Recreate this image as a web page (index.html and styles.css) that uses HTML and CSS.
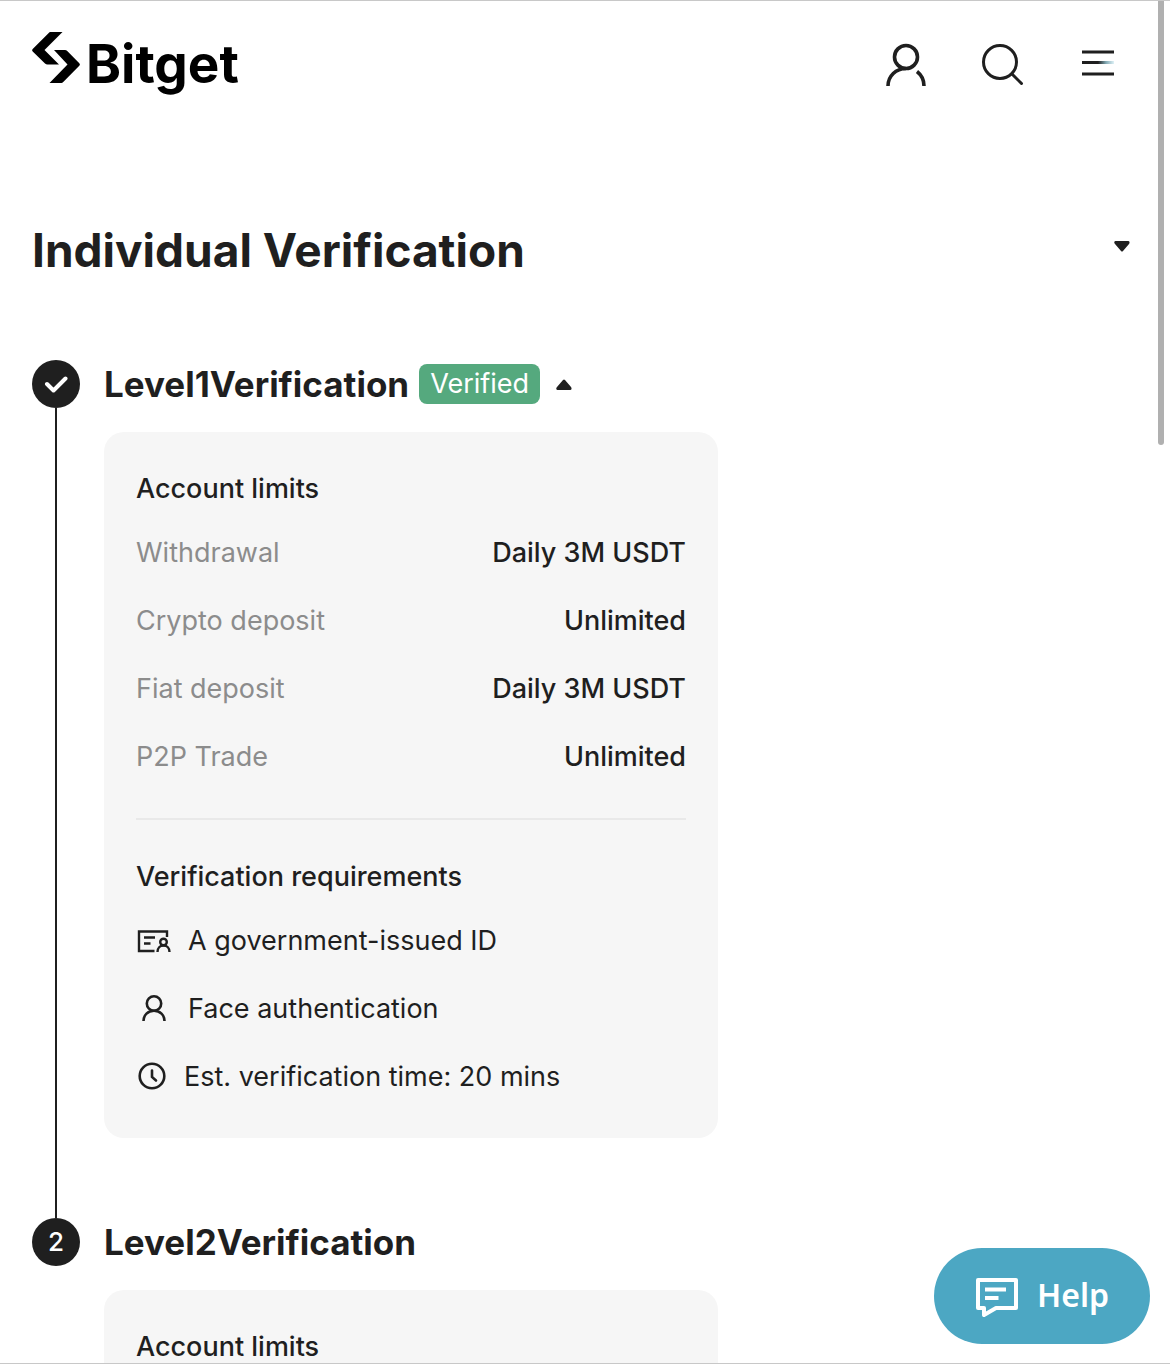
FILE: index.html
```html
<!DOCTYPE html>
<html lang="en">
<head>
<meta charset="utf-8">
<meta name="viewport" content="width=device-width, initial-scale=1">
<title>Individual Verification</title>
<link rel="stylesheet" href="styles.css">
</head>
<body>
<div class="page">
  <header class="header">
    <a class="logo" href="#">
      <svg class="logo-mark" width="48" height="52" viewBox="0 0 48 52" aria-hidden="true"><path d="M18 0H30.500L12.500 18L27 32.500H15.500Q14 32.500 13 31.500L.7 19.500Q-.5 18.300 .7 17L17 .7Q17.500 0 18 0ZM22 18H33Q34.200 18 35 18.800L47.300 31.200Q48.500 32.500 47.300 33.700L31 50.300Q30.300 51 29.500 51H17.500L35.500 32.500Z"/></svg>
      <span class="logo-name">Bitget</span>
    </a>
    <nav class="actions">
      <button class="icon-button" type="button" aria-label="Account">
        <svg width="48" height="48" viewBox="0 0 48 48" fill="none" stroke="#1f1f1f" stroke-width="3.600"><circle cx="24" cy="17" r="11.500"/><path d="M6 46C6 36 14 28.500 24 28.500M42 46C42 40 39.500 35 35 31.500"/></svg>
      </button>
      <button class="icon-button" type="button" aria-label="Search">
        <svg width="48" height="48" viewBox="0 0 48 48" fill="none" stroke="#1f1f1f" stroke-width="3" stroke-linecap="round"><circle cx="22" cy="22" r="16.500"/><path d="M34 34L43.500 43.500"/></svg>
      </button>
      <button class="icon-button" type="button" aria-label="Menu">
        <svg width="48" height="48" viewBox="0 0 48 48"><defs><linearGradient id="fade"><stop offset=".5" stop-color="#1f1f1f"/><stop offset=".75" stop-color="#82a9b4"/><stop offset="1" stop-color="#dff2f7"/></linearGradient></defs><path fill="#1f1f1f" d="M8 10.500H40V13.500H8ZM8 32.500H40V35.500H8Z"/><rect x="8" y="21" width="32" height="3" fill="url(#fade)"/></svg>
      </button>
    </nav>
  </header>

  <main class="main">
    <div class="title-row">
      <h1 class="title">Individual Verification</h1>
      <button class="caret-button" type="button" aria-label="Change verification type">
        <svg width="16" height="11" viewBox="0 0 16 11" fill="#1f1f1f"><path d="M1.500 0H14.500Q16 .5 15.500 2L15 3L9 10Q8 11 7 10L1 3Q0 2 .3 1Q.6 0 1.500 0Z"/></svg>
      </button>
    </div>

    <ol class="steps">
      <li class="step">
        <div class="rail">
          <span class="badge">
            <svg width="24" height="24" viewBox="0 0 24 24" fill="none" stroke="#fff" stroke-width="4" stroke-linecap="round" stroke-linejoin="round" aria-hidden="true"><path d="M3 12L9.500 18.500L21.500 6.500"/></svg>
          </span>
          <span class="line"></span>
        </div>
        <div class="step-body">
          <div class="step-head">
            <h2 class="step-title">Level1Verification</h2>
            <span class="tag">Verified</span>
            <button class="caret-button" type="button" aria-label="Collapse">
              <svg width="16" height="11" viewBox="0 0 16 11" fill="#1f1f1f"><path d="M1.500 11H14.500Q16 10.500 15.500 9L15 8L9 1Q8 0 7 1L1 8Q0 9 .3 10Q.6 11 1.500 11Z"/></svg>
            </button>
          </div>
          <section class="card">
            <h3 class="card-title">Account limits</h3>
            <table class="limits">
              <tbody>
                <tr><th scope="row">Withdrawal</th><td>Daily 3M USDT</td></tr>
                <tr><th scope="row">Crypto deposit</th><td>Unlimited</td></tr>
                <tr><th scope="row">Fiat deposit</th><td>Daily 3M USDT</td></tr>
                <tr><th scope="row">P2P Trade</th><td>Unlimited</td></tr>
              </tbody>
            </table>
            <hr class="divider">
            <h3 class="card-title">Verification requirements</h3>
            <ul class="needs">
              <li class="need">
                <svg width="36" height="36" viewBox="0 0 36 36" fill="none" stroke="#1f1f1f" stroke-width="2.400" aria-hidden="true"><path d="M18.500 28H3V8.500H31V14M8 14.500H19M8 20.500H14.500"/><circle cx="27.500" cy="19" r="3.300"/><path d="M21.500 29C21.500 25 24 22.500 27.500 22.500S33.500 25 33.500 29"/></svg>
                <span>A government-issued ID</span>
              </li>
              <li class="need">
                <svg width="36" height="36" viewBox="0 0 36 36" fill="none" stroke="#1f1f1f" stroke-width="2.600" aria-hidden="true"><circle cx="18" cy="12.500" r="7.200"/><path d="M7.500 30C7.500 24 12 19.700 18 19.700S28.500 24 28.500 30"/></svg>
                <span>Face authentication</span>
              </li>
              <li class="need">
                <svg width="32" height="36" viewBox="0 0 32 36" fill="none" stroke="#1f1f1f" stroke-width="2.600" stroke-linecap="round" aria-hidden="true"><circle cx="16" cy="17" r="12.300"/><path d="M16 11.500V18L20 21.500"/></svg>
                <span>Est. verification time: 20 mins</span>
              </li>
            </ul>
          </section>
        </div>
      </li>
      <li class="step">
        <div class="rail"><span class="badge">2</span></div>
        <div class="step-body">
          <div class="step-head">
            <h2 class="step-title">Level2Verification</h2>
          </div>
          <section class="card">
            <h3 class="card-title">Account limits</h3>
          </section>
        </div>
      </li>
    </ol>
  </main>

  <span class="scroll-thumb"></span>
  <button class="help" type="button">
    <svg width="44" height="44" viewBox="0 0 44 44" fill="none" stroke="#fff" stroke-width="4" stroke-linejoin="round" aria-hidden="true"><path d="M3 7H41V35H21L9 42V35H3Z"/><path d="M10 16.500H31M10 25H23.500"/></svg>
    <span>Help</span>
  </button>
</div>
</body>
</html>
```
FILE: styles.css
```css
* {
  box-sizing: border-box;
}

body {
  margin: 0;
  background: #fff;
  color: #1f1f1f;
  font-family: Inter, "Liberation Sans", sans-serif;
  font-size: 27px;
  line-height: 44px;
}

h1, h2, h3, ol, ul {
  margin: 0;
  padding: 0;
}

ol, ul {
  list-style: none;
}

button {
  border: 0;
  padding: 0;
  background: none;
  color: inherit;
  font: inherit;
  cursor: pointer;
}

svg {
  display: block;
  flex: none;
}

.page {
  position: relative;
  height: 100vh;
  overflow: hidden;
  border-top: 1px solid #c8c8c8;
  border-bottom: 1px solid #c8c8c8;
}

.header {
  display: flex;
  align-items: center;
  justify-content: space-between;
  height: 125px;
  padding: 0 48px 0 32px;
}

.logo {
  display: flex;
  align-items: center;
  gap: 6px;
  color: #000;
  text-decoration: none;
}

.logo-mark {
  margin-bottom: 12px;
}

.logo-name {
  font-size: 53px;
  font-weight: 700;
  line-height: 64px;
}

.actions {
  display: flex;
  gap: 48px;
}

.main {
  padding: 90px 32px 0;
}

.title-row {
  display: flex;
  align-items: center;
  justify-content: space-between;
  margin-bottom: 76px;
  padding-right: 8px;
}

.title-row .caret-button {
  padding-bottom: 8px;
}

.title {
  font-size: 46px;
  font-weight: 700;
  line-height: 68px;
}

.step {
  display: flex;
  gap: 24px;
}

.rail {
  display: flex;
  flex: none;
  flex-direction: column;
  align-items: center;
}

.badge {
  display: flex;
  align-items: center;
  justify-content: center;
  width: 48px;
  height: 48px;
  border-radius: 50%;
  background: #1f1f1f;
  color: #fff;
  font-size: 26px;
  font-weight: 500;
}

.line {
  flex: 1;
  width: 2px;
  background: #1f1f1f;
}

.step-body {
  flex: 1;
  padding-bottom: 80px;
}

.step-head {
  display: flex;
  align-items: center;
  height: 48px;
  margin-bottom: 24px;
}

.step-title {
  font-size: 35px;
  font-weight: 700;
  line-height: 48px;
}

.tag {
  margin: 0 16px 0 10px;
  padding: 0 11px;
  border-radius: 8px;
  background: #55a97e;
  color: #fff;
  line-height: 40px;
}

.card {
  max-width: 614px;
  padding: 35px 32px 39px;
  border-radius: 20px;
  background: #f6f6f6;
}

.card-title {
  font-size: 27px;
  font-weight: 500;
}

.limits {
  width: 100%;
  margin-top: 8px;
  border-collapse: collapse;
}

.limits th,
.limits td {
  height: 68px;
  padding: 0;
}

.limits th {
  color: #8c8c8c;
  font-weight: 400;
  text-align: left;
}

.limits td {
  font-weight: 500;
  text-align: right;
}

.divider {
  height: 2px;
  margin: 27px 0 35px;
  border: 0;
  background: #e9e9e9;
}

.needs {
  display: flex;
  flex-direction: column;
  gap: 24px;
  margin-top: 20px;
}

.need {
  display: flex;
  align-items: center;
  gap: 16px;
}

.scroll-thumb {
  position: absolute;
  top: -8px;
  right: 6px;
  width: 6px;
  height: 452px;
  border-radius: 3px;
  background: #b0b0b0;
}

.help {
  position: absolute;
  right: 20px;
  bottom: 19px;
  display: flex;
  align-items: center;
  justify-content: center;
  gap: 18px;
  width: 216px;
  height: 96px;
  padding-bottom: 2px;
  border-radius: 48px;
  background: #4ca7c3;
  color: #fff;
  font-family: "Noto Sans", "Open Sans", sans-serif;
  font-size: 32px;
  font-weight: 600;
}
```
